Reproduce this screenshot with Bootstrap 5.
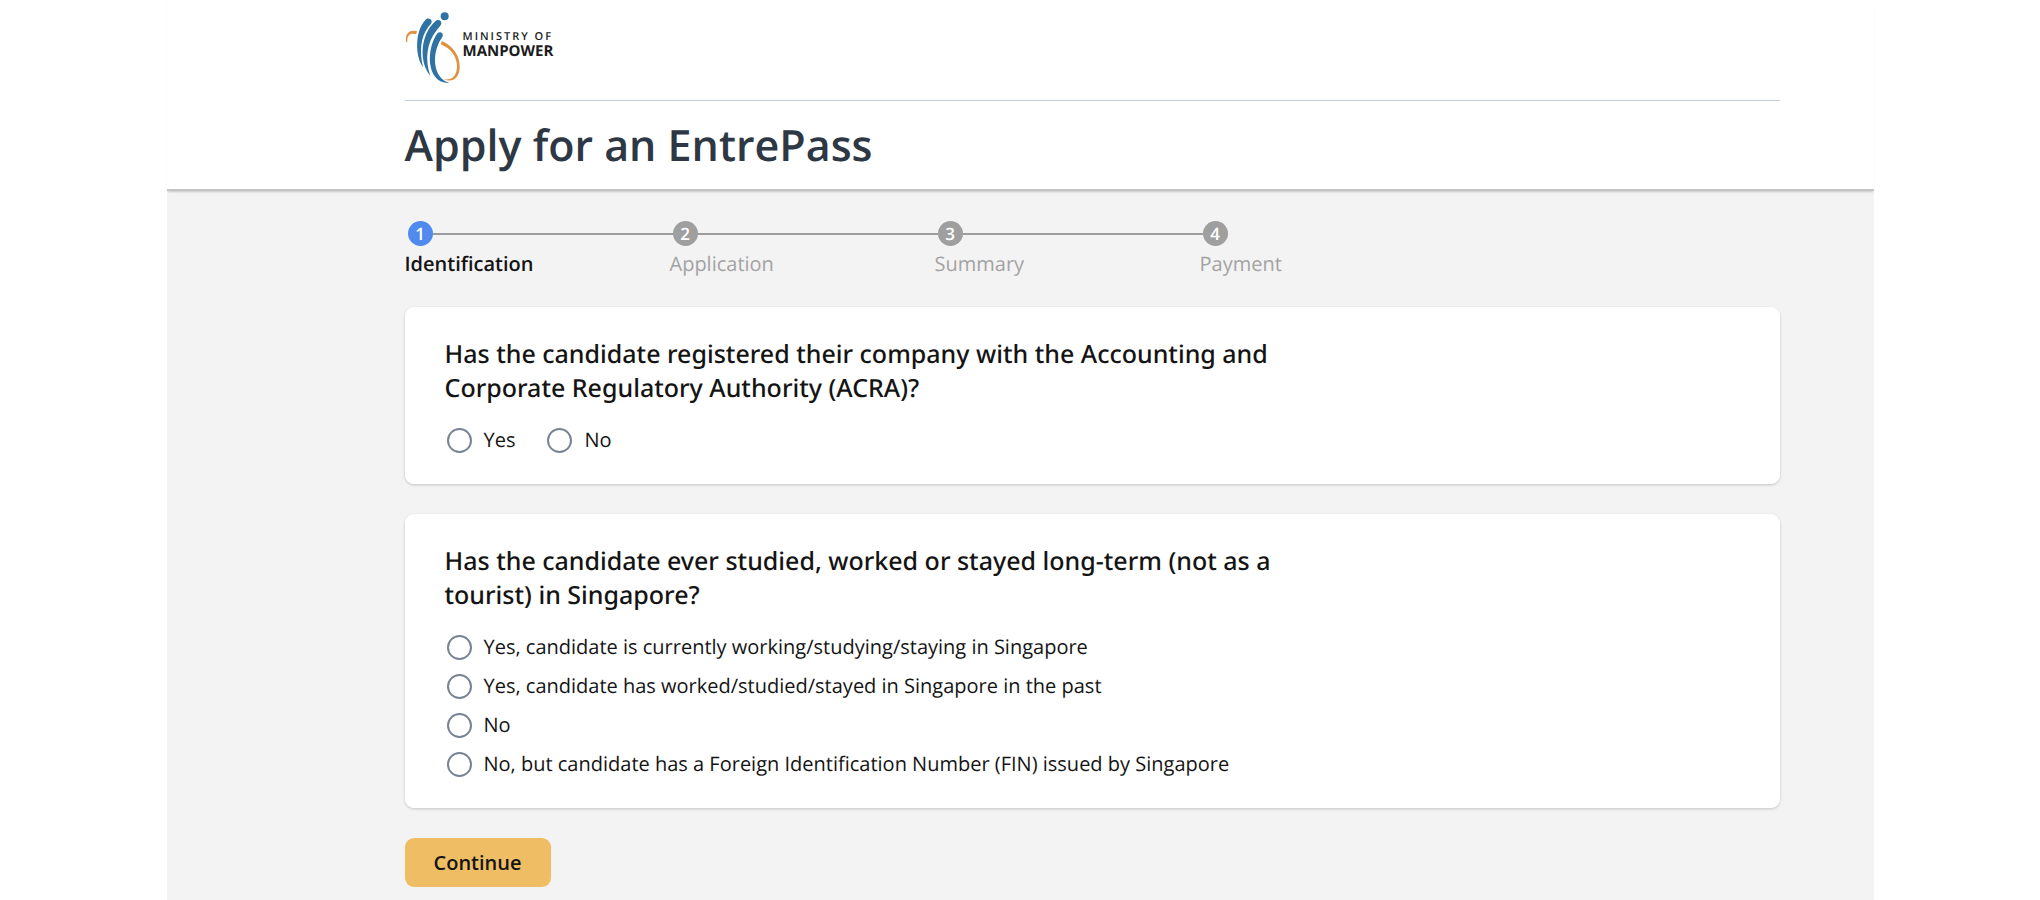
<!DOCTYPE html>
<html lang="en">
<head>
<meta charset="utf-8">
<meta name="viewport" content="width=device-width, initial-scale=1">
<title>Apply for an EntrePass</title>
<link href="https://cdn.jsdelivr.net/npm/bootstrap@5.3.0/dist/css/bootstrap.min.css" rel="stylesheet">
<style>
  body { font-family: "Open Sans", "Noto Sans", sans-serif; font-size: 20px; line-height: 28px; color: #141414; background: #fff; text-rendering: geometricPrecision; }
  .frame { max-width: 1707px; }
  .gutter { padding-left: 16px; padding-right: 16px; }
  .brand-bar { height: 101px; padding-top: 12px; border-bottom: 1px solid #c5cddb; }
  .brand-mark { width: 55px; height: 73px; }
  .brand-text { color: #1c1c1c; font-weight: 700; font-size: 15px; line-height: 14px; padding: 18px 0 0 3px; }
  .brand-top { font-size: 11px; letter-spacing: 2px; font-weight: 600; }
  .page-title { font-size: 43px; line-height: 64px; font-weight: 600; color: #2e3744; padding: 12px 0; }
  .masthead { border-bottom: 2px solid #c4c4c4; box-shadow: 0 2px 2px -1px rgba(0,0,0,.18); z-index: 1; }
  .work-area { background: #f3f3f3; padding-top: 30px; padding-bottom: 12px; }
  .steps { margin-bottom: 29px; }
  .step { width: 265px; color: #a3a3a3; }
  .step-head { padding-left: 3px; height: 25px; }
  .step-dot { width: 25px; height: 25px; border-radius: 50%; background: #9f9f9f; color: #fff; font-size: 17px; line-height: 25px; font-weight: 600; }
  .step-line { height: 2px; background: #9c9c9c; margin-right: -3px; }
  .step.active { color: #141414; font-weight: 600; }
  .step.active .step-dot { background: #508aef; }
  .step-label { padding-top: 4px; }
  .question { border: 0; border-radius: 9px; padding: 30px 40px; margin-bottom: 30px; box-shadow: 0 1px 3px rgba(0,0,0,.2); }
  .question legend { font-family: "Noto Sans", sans-serif; font-size: 25px; line-height: 34px; font-weight: 500; max-width: 840px; margin-bottom: 21px; }
  .choice { display: flex; align-items: center; gap: 12px; min-height: 28px; padding-left: 2px; margin: 0; }
  .choice .form-check-input { width: 25px; height: 25px; margin: 0; float: none; border: 2px solid #788494; flex: none; }
  .choice-list { display: flex; flex-direction: column; gap: 11px; }
  .choice-row { display: flex; gap: 30px; }
  .btn-continue { background: #eebd64; color: #141414; font-weight: 600; font-size: 20px; line-height: 28px; border: 0; border-radius: 9px; padding: 11px 29px 10px; }
  .btn-continue:hover { background: #e6b050; }
  @media (min-width: 1400px) { .gutter { padding-left: 238px; padding-right: 94px; } }
</style>
</head>
<body>
<div class="frame mx-auto min-vh-100 d-flex flex-column">
  <header class="masthead gutter position-relative">
    <div class="brand-bar d-flex align-items-start">
      <svg class="brand-mark" viewBox="45 37 165 219" aria-hidden="true">
        <g fill="#e0923f">
          <path d="M48 127C44 101 60 88 82 95L78 104C62 98 50 107 52 128Z"/>
          <path d="M156 124C190 139 211 170 209 205C207 238 185 250 161 238C188 244 202 226 201 197C199 168 181 146 152 134Z"/>
        </g>
        <g fill="#2e73a3">
          <circle cx="164" cy="50" r="12"/>
          <path d="M106 61C113 53 126 57 125 67C124 73 118 78 114 83C92 113 88 155 99 202C77 174 72 98 106 61Z"/>
          <path d="M136 65C143 57 156 62 154 72C152 79 146 83 141 90C108 130 105 183 121 228C89 193 87 109 136 65Z"/>
          <path d="M143 100C150 94 161 99 158 109C157 114 152 119 149 125C124 173 132 236 178 250C108 253 107 146 143 100Z"/>
        </g>
      </svg>
      <div class="brand-text"><div class="brand-top">MINISTRY OF</div><div>MANPOWER</div></div>
    </div>
    <h1 class="page-title m-0">Apply for an EntrePass</h1>
  </header>

  <main class="work-area gutter flex-grow-1">
    <ol class="steps list-unstyled d-flex flex-wrap">
      <li class="step active" aria-current="step">
        <div class="step-head d-flex align-items-center"><span class="step-dot text-center">1</span><span class="step-line flex-grow-1"></span></div>
        <div class="step-label">Identification</div>
      </li>
      <li class="step">
        <div class="step-head d-flex align-items-center"><span class="step-dot text-center">2</span><span class="step-line flex-grow-1"></span></div>
        <div class="step-label">Application</div>
      </li>
      <li class="step">
        <div class="step-head d-flex align-items-center"><span class="step-dot text-center">3</span><span class="step-line flex-grow-1"></span></div>
        <div class="step-label">Summary</div>
      </li>
      <li class="step">
        <div class="step-head d-flex align-items-center"><span class="step-dot text-center">4</span></div>
        <div class="step-label">Payment</div>
      </li>
    </ol>

    <form>
      <fieldset class="card question">
        <legend>Has the candidate registered their company with the Accounting and Corporate Regulatory Authority (ACRA)?</legend>
        <div class="choice-row">
          <div class="choice"><input class="form-check-input" type="radio" name="acra" id="acra-yes"><label for="acra-yes">Yes</label></div>
          <div class="choice"><input class="form-check-input" type="radio" name="acra" id="acra-no"><label for="acra-no">No</label></div>
        </div>
      </fieldset>
      <fieldset class="card question">
        <legend>Has the candidate ever studied, worked or stayed long-term (not as a tourist) in Singapore?</legend>
        <div class="choice-list">
          <div class="choice"><input class="form-check-input" type="radio" name="stay" id="stay-now"><label for="stay-now">Yes, candidate is currently working/studying/staying in Singapore</label></div>
          <div class="choice"><input class="form-check-input" type="radio" name="stay" id="stay-past"><label for="stay-past">Yes, candidate has worked/studied/stayed in Singapore in the past</label></div>
          <div class="choice"><input class="form-check-input" type="radio" name="stay" id="stay-no"><label for="stay-no">No</label></div>
          <div class="choice"><input class="form-check-input" type="radio" name="stay" id="stay-fin"><label for="stay-fin">No, but candidate has a Foreign Identification Number (FIN) issued by Singapore</label></div>
        </div>
      </fieldset>
      <button type="button" class="btn btn-continue">Continue</button>
    </form>
  </main>
</div>
<script src="https://cdn.jsdelivr.net/npm/bootstrap@5.3.0/dist/js/bootstrap.bundle.min.js"></script>
</body>
</html>
